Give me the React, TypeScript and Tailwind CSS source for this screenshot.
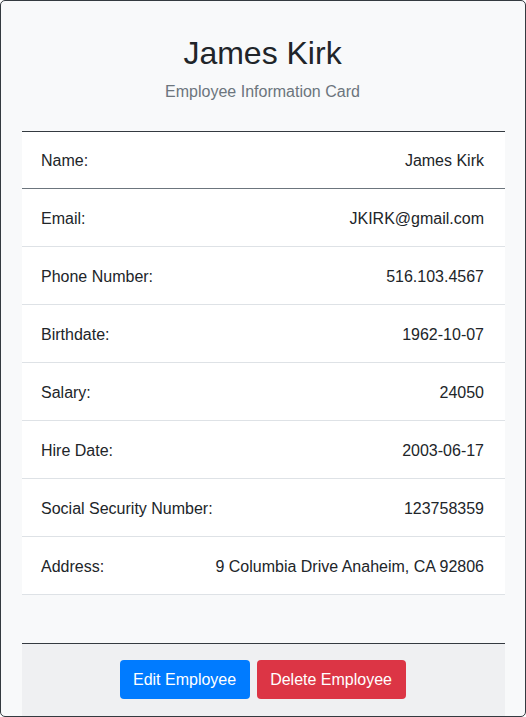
import React from "react";

const rows: [string, string][] = [
  ["Name:", "James Kirk"],
  ["Email:", "JKIRK@gmail.com"],
  ["Phone Number:", "516.103.4567"],
  ["Birthdate:", "1962-10-07"],
  ["Salary:", "24050"],
  ["Hire Date:", "2003-06-17"],
  ["Social Security Number:", "123758359"],
  ["Address:", "9 Columbia Drive Anaheim, CA 92806"],
];

const App = () => {
  return (
    <div className="w-[526px] h-[717px] font-['Liberation_Sans',Arial,sans-serif] text-[#212529]">
      <div className="flex h-full flex-col rounded-[5px] border border-[#343a40] bg-[#f8f9fa] px-[21px] pr-[20px]">
        <h2 className="mt-[33px] pr-[2px] text-center text-[32px] leading-[38px]">James Kirk</h2>
        <p className="mt-[8px] pr-[2px] text-center text-[16px] leading-[24px] text-[#6c757d]">
          Employee Information Card
        </p>

        <ul className="mt-[27px] border-t border-[#343a40] bg-white">
          {rows.map(([label, value], i) => (
            <li
              key={label}
              className={
                i === 0
                  ? "flex h-[57px] items-center justify-between border-b border-[#6c757d] pl-[19px] pr-[21px] pt-[2px] text-[16px]"
                  : "flex h-[58px] items-center justify-between border-b border-[#dee2e6] pl-[19px] pr-[21px] pt-[2px] text-[16px]"
              }
            >
              <span>{label}</span>
              <span>{value}</span>
            </li>
          ))}
        </ul>

        <div className="mt-[48px] flex flex-1 items-start justify-center gap-[7px] border-t border-[#343a40] bg-[#eff0f2] pr-[1px] pt-[16px]">
          <button className="h-[39px] rounded-[4px] bg-[#007bff] pl-[13px] pr-[14px] text-[16px] text-white">
            Edit Employee
          </button>
          <button className="h-[39px] rounded-[4px] bg-[#dc3545] pl-[13px] pr-[14px] text-[16px] text-white">
            Delete Employee
          </button>
        </div>
      </div>
    </div>
  );
};

export default App;
